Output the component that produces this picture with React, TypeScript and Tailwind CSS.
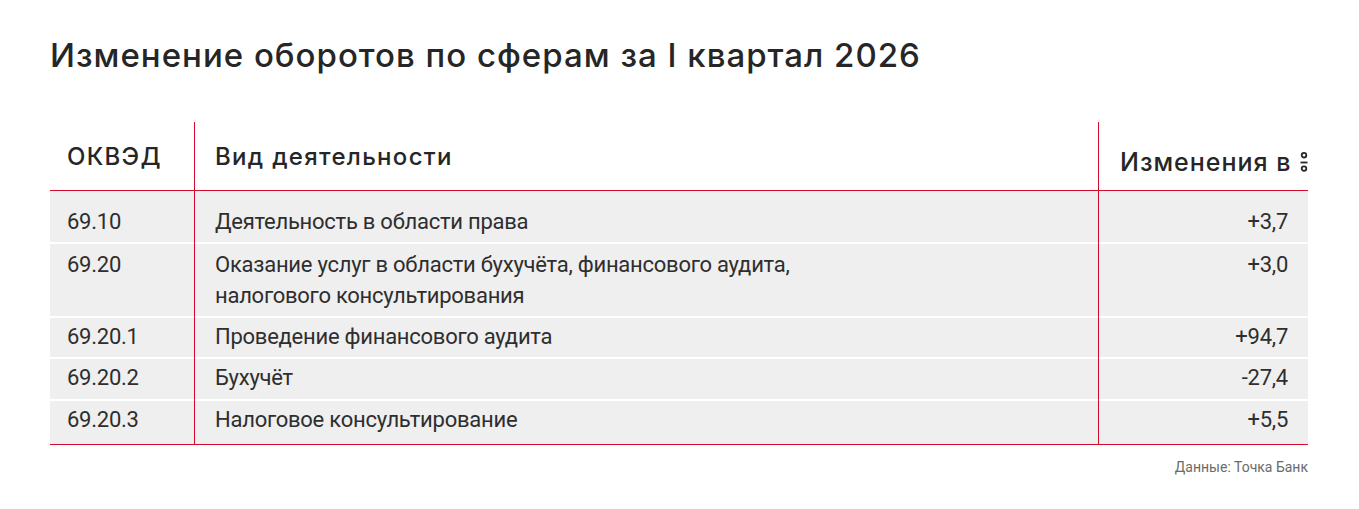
import React from "react";

type Row = {
  code: string;
  lines: string[];
  value: string;
  h: string;
  pt: string;
  last?: boolean;
};

const rows: Row[] = [
  { code: "69.10", lines: ["Деятельность в области права"], value: "+3,7", h: "h-[53px]", pt: "pt-[15px]" },
  {
    code: "69.20",
    lines: ["Оказание услуг в области бухучёта, финансового аудита,", "налогового консультирования"],
    value: "+3,0",
    h: "h-[74px]",
    pt: "pt-[5px]",
  },
  { code: "69.20.1", lines: ["Проведение финансового аудита"], value: "+94,7", h: "h-[41px]", pt: "pt-[3px]" },
  { code: "69.20.2", lines: ["Бухучёт"], value: "-27,4", h: "h-[42px]", pt: "pt-[3px]" },
  { code: "69.20.3", lines: ["Налоговое консультирование"], value: "+5,5", h: "h-[43px]", pt: "pt-[3px]", last: true },
];

const red = "border-[#d20a2e]";

const PercentMark: React.FC = () => (
  <svg width="8" height="20" viewBox="0 0 8 20" className="inline-block ml-[8px] align-[-1px]">
    <circle cx="4" cy="3.2" r="2.3" fill="none" stroke="#262626" strokeWidth="1.8" />
    <line x1="0.5" y1="10.5" x2="7.5" y2="10.5" stroke="#262626" strokeWidth="1.8" />
    <circle cx="4" cy="16.6" r="2.3" fill="none" stroke="#262626" strokeWidth="1.8" />
  </svg>
);

const App: React.FC = () => {
  return (
    <div className="w-[1359px] h-[509px] bg-white px-[50px] pt-[35px] text-[#262626]">
      <h1 className="font-['Inter',sans-serif] font-medium text-[33px] leading-[40px] tracking-[1px]">
        Изменение оборотов по сферам за I квартал 2026
      </h1>

      <div className="mt-[47px] w-[1258px]">
        {/* header */}
        <div className={`flex h-[69px] border-b ${red} font-['Inter',sans-serif] font-medium`}>
          <div className="w-[144px] pl-[17px] pt-[21px] text-[24px] leading-[28px] tracking-[1.3px]">ОКВЭД</div>
          <div className={`w-[904px] border-l ${red} pl-[20px] pt-[21px] text-[24px] leading-[28px] tracking-[1.3px]`}>
            Вид деятельности
          </div>
          <div className={`w-[210px] border-l ${red} pl-[21px] pt-[24px] text-[25px] leading-[32px] tracking-[1px] whitespace-nowrap overflow-hidden`}>
            Изменения в<PercentMark />
          </div>
        </div>

        {/* body */}
        {rows.map(row => {
          const cell = `bg-[#efefef] ${row.h} ${row.pt} ${row.last ? "" : "shadow-[inset_0_-2px_0_#ffffff]"}`;
          return (
            <div key={row.code} className="flex font-['Roboto',sans-serif] text-[22px] leading-[31px] tracking-[-0.25px] text-[#2e2e2e]">
              <div className={`w-[144px] pl-[17px] ${cell}`}>{row.code}</div>
              <div className={`w-[904px] border-l ${red} pl-[20px] ${cell}`}>
                {row.lines.map(l => (
                  <div key={l}>{l}</div>
                ))}
              </div>
              <div className={`w-[210px] border-l ${red} pr-[20px] text-right ${cell}`}>{row.value}</div>
            </div>
          );
        })}
        <div className={`border-t ${red}`} />

        <div className="mt-[12px] text-right font-['Roboto',sans-serif] text-[14px] leading-[20px] text-[#6b6b6b]">
          Данные: Точка Банк
        </div>
      </div>
    </div>
  );
};

export default App;
